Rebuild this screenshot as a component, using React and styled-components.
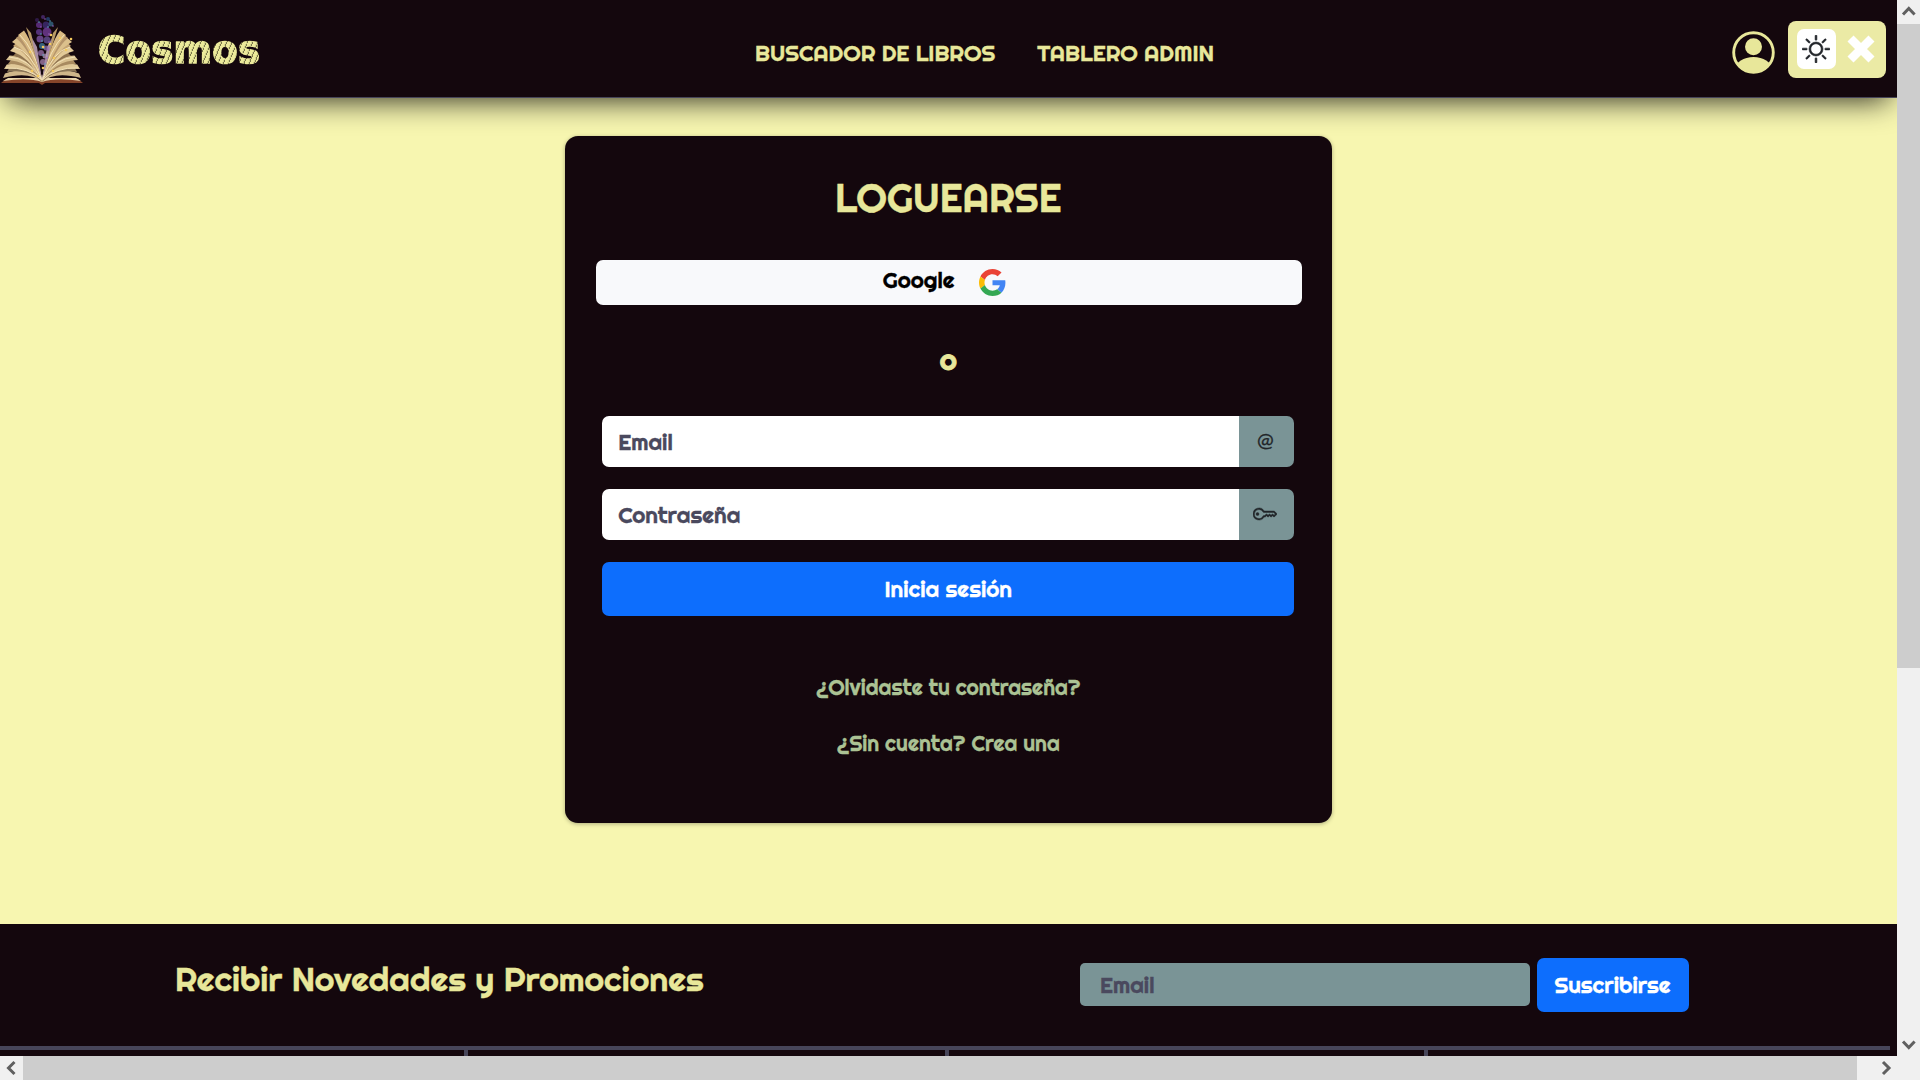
import React from "react";
import styled, { createGlobalStyle } from "styled-components";
import { BsSun, BsKey } from "react-icons/bs";

const ink = "#14070d";
const cream = "#e8e79a";
const sand = "#f7f6b0";
const slate = "#474559";
const sage = "#7a9496";
const blue = "#0d6efd";

const GlobalStyle = createGlobalStyle`
  * { box-sizing: border-box; }
  body { margin: 0; overflow: hidden; background: ${sand}; font-family: Righteous, Lato, "Open Sans", sans-serif; font-weight: 400; -webkit-text-stroke: 0.3px currentColor; }
  button, input { font: inherit; border: 0; margin: 0; -webkit-text-stroke: inherit; }
`;

const Window = styled.div`
  display: grid;
  grid-template-columns: 1897px 23px;
  grid-template-rows: 1056px 24px;
  width: 1920px;
  height: 1080px;
`;
const Viewport = styled.div`
  display: flex;
  flex-direction: column;
  overflow: hidden;
  background: ${sand};
`;
const Header = styled.header`
  flex: none;
  display: grid;
  grid-template-columns: 755px 1fr 165.5px;
  height: 98px;
  background: ${ink};
  border-bottom: 1px solid ${slate};
  box-shadow: 0 10px 30px -8px rgba(0, 0, 0, 0.85);
  z-index: 1;
`;
const Brand = styled.div`
  display: flex;
  align-items: flex-start;
  padding-top: 13px;
  gap: 13px;
`;
const BrandName = styled.span`
  font: 700 37px/44px "DejaVu Sans", sans-serif;
  margin-top: 16px;
  letter-spacing: 0.3px;
  color: transparent;
  -webkit-text-stroke: 1.6px transparent;
  background: repeating-linear-gradient(112deg, #ecea9b 0 3px, #d6d58c 3px 4px, #7a774b 4px 4.8px);
  -webkit-background-clip: text;
  background-clip: text;
`;
const Nav = styled.nav`
  display: flex;
  gap: 42px;
  padding-top: 38px;
`;
const NavLink = styled.a`
  font-size: 22.5px;
  line-height: 30px;
  white-space: nowrap;
  color: ${cream};
`;
const Tools = styled.div`
  display: flex;
  align-items: flex-start;
  gap: 13px;
  padding-top: 21px;
`;
const UserIcon = styled.svg`
  flex: none;
  margin-top: 9.5px;
`;
const ThemeToggle = styled.div`
  display: flex;
  align-items: center;
  gap: 11px;
  width: 98.5px;
  height: 56.5px;
  padding: 0 9px 1px;
  border-radius: 8px;
  background: #ebeaa5;
`;
const Knob = styled.span`
  display: grid;
  place-items: center;
  width: 39px;
  height: 40px;
  border-radius: 7px;
  background: #fff;
  color: #212529;
`;
const Main = styled.main`
  flex: none;
  height: 826px;
  padding-top: 38px;
`;
const Card = styled.section`
  width: 767.5px;
  height: 686.5px;
  margin-left: 564.5px;
  padding: 37.5px 31px 0;
  border-radius: 13px;
  background: ${ink};
  box-shadow: 0 1px 4px rgba(0, 0, 0, 0.3);
  text-align: center;
`;
const Title = styled.h1`
  margin: 0 0 38.5px;
  font-size: 39.4px;
  font-weight: 400;
  line-height: 48px;
  color: ${cream};
`;
const GoogleButton = styled.button`
  display: flex;
  align-items: center;
  justify-content: center;
  gap: 24.5px;
  width: 706px;
  height: 45px;
  padding: 0 8px 0 0;
  border-radius: 7px;
  background: #f8f9fb;
  color: #000;
  font-size: 22.5px;
`;
const ButtonLabel = styled.span`
  margin-top: -6px;
`;
const Or = styled.p`
  margin: 35px 0 36px;
  font-size: 29.5px;
  -webkit-text-stroke: 0.8px currentColor;
  line-height: 40px;
  color: ${cream};
`;
const Form = styled.form`
  display: flex;
  flex-direction: column;
  gap: 22.3px;
  width: 692px;
  margin: 0 auto;
`;
const Field = styled.label`
  display: flex;
  height: 50.7px;
  border-radius: 7px;
  overflow: hidden;
`;
const Input = styled.input`
  flex: 1;
  min-width: 0;
  padding: 1px 16px 0;
  font-size: 22.5px;
  background: #fff;
  outline: none;
  &::placeholder { color: #4a495e; opacity: 1; }
`;
const Addon = styled.span`
  display: grid;
  place-items: center;
  width: 55px;
  padding: 0 3px ${(p) => p.$lift || 0}px 0;
  background: ${sage};
  color: #212529;
  font: 400 20px/24px Lato, sans-serif;
`;
const PrimaryButton = styled.button`
  flex: none;
  width: ${(p) => p.$width};
  height: 54px;
  padding: 0;
  border-radius: 7px;
  background: ${blue};
  color: #fff;
  font-size: 22.5px;
`;
const Links = styled.div`
  display: flex;
  flex-direction: column;
  gap: 26.5px;
  padding-top: 56px;
`;
const TextLink = styled.a`
  font-size: 21.1px;
  line-height: 30px;
  color: #abc294;
`;
const Footer = styled.footer`
  flex: none;
  height: 132px;
  background: ${ink};
`;
const Newsletter = styled.div`
  display: flex;
  align-items: flex-start;
  height: 122px;
  padding: 33.5px 208.5px 0 175px;
`;
const NewsTitle = styled.h2`
  flex: 1;
  margin: 1.5px 0 0;
  font-size: 33.8px;
  font-weight: 400;
  line-height: 40px;
  color: ${cream};
`;
const NewsInput = styled(Input)`
  flex: none;
  width: 450px;
  height: 43px;
  margin: 5.5px 7px 0 0;
  padding: 1px 20.5px 0;
  border-radius: 5px;
  background: ${sage};
`;
const Columns = styled.div`
  display: grid;
  grid-template-columns: 468px 480.5px 479.5px 1fr;
  width: 1890px;
  height: 10px;
  border-top: 4.5px solid ${slate};
`;
const Column = styled.div`
  border-right: ${(p) => (p.$last ? 0 : 4)}px solid ${slate};
`;
const VBar = styled.div`
  display: flex;
  flex-direction: column;
  align-items: center;
  background: #f0f0f0;
`;
const HBar = styled.div`
  display: flex;
  align-items: center;
  grid-column: 1 / 3;
  background: #f0f0f0;
`;
const Arrow = styled.svg`
  flex: none;
  fill: none;
  stroke: #606060;
  stroke-width: 3;
`;
const VThumb = styled.div`
  width: 23px;
  height: 644px;
  margin-bottom: auto;
  background: #cdcdcd;
`;
const HThumb = styled.div`
  width: 1834px;
  height: 24px;
  margin-right: auto;
  background: #cdcdcd;
`;

const pages = [
  [3, 65, "#cfb68a"], [7, 59, "#8a7557"], [4, 56, "#e0c898"], [8, 51, "#a88a60"], [6, 47, "#d9c090"],
  [13, 43, "#8f7350"], [10, 38, "#e2c998"], [13, 33, "#c4a473"], [12, 29, "#dcc08c"], [16, 25, "#b5946a"],
  [18, 22, "#d8b982"],
];
const sparks = [
  [30, 39], [43, 34], [51, 22], [60, 25], [71, 26], [54, 45], [43, 55], [32, 58], [53, 58], [38, 63], [66, 37], [50, 31],
];
const dust = [
  [37, 7, 2, "#38205c"], [43, 4, 2, "#51307e"], [48, 6, 2, "#274b80"], [39, 12, 3, "#6b3596"], [46, 12, 3.5, "#41307b"],
  [51, 11, 2.5, "#366c8a"], [39, 19, 3, "#6a3f9c"], [47, 19, 4.5, "#7a42a2"], [40, 26, 3.5, "#8158ac"], [47, 27, 3.5, "#6a559c"],
  [42, 33, 3, "#4180a0"], [46, 35, 2.5, "#8a6aaa"], [41, 40, 3, "#9b74ae"], [45, 43, 2.5, "#b69bbc"], [43, 49, 3, "#a884b0"],
];

function BookLogo() {
  return (
    <svg width="85" height="75" viewBox="0 0 85 75">
      <path d="M1 70L6 66H78L83 70H45L42 72L39 70Z" fill="#86452a" />
      <path d="M3 68Q28 64 42 69Q56 64 81 68L76 65H8Z" fill="#ead6ad" />
      {[1, -1].map((side) => (
        <g key={side} transform={side === 1 ? undefined : "translate(84 0) scale(-1 1)"}>
          {pages.map(([x, y, fill], i) => (
            <path
              key={i}
              d={`M42 69Q${30 - i * 0.2} ${58 - i * 2.6} ${x} ${y}L${x + 2 + i * 0.4} ${y - 4.5}Q${32 + i * 0.2} ${51 - i * 2} 42 69Z`}
              fill={fill}
            />
          ))}
          <path d="M42 67Q28 54 6 55M42 67Q29 45 9 44M42 67Q31 38 14 34M42 66Q34 36 20 22" fill="none" stroke="#f3e2b8" strokeWidth="1" />
          <path d="M42 66L26 14L31 20Z" fill="#b99a67" />
          <path d="M42 67Q34 40 32 25L37 34Z" fill="#a98fa4" />
        </g>
      ))}
      {dust.map(([x, y, r, fill], i) => (
        <circle key={i} cx={x} cy={y} r={r} fill={fill} opacity="0.75" />
      ))}
      {dust.map(([x, y], i) => (
        <circle key={i} cx={x + 2} cy={y + 2} r="0.8" fill={i % 2 ? "#9a63c4" : "#58a9bd"} />
      ))}
      {sparks.map(([x, y], i) => (
        <circle key={i} cx={x} cy={y} r="1.3" fill="#f3c95d" />
      ))}
    </svg>
  );
}

function GoogleMark() {
  return (
    <svg width="27" height="27" viewBox="0 0 48 48">
      <path fill="#EA4335" d="M24 9.5c3.54 0 6.71 1.22 9.21 3.6l6.85-6.85C35.9 2.38 30.47 0 24 0 14.62 0 6.51 5.38 2.56 13.22l7.98 6.19C12.43 13.72 17.74 9.5 24 9.5z" />
      <path fill="#4285F4" d="M46.98 24.55c0-1.57-.15-3.09-.38-4.55H24v9.02h12.94c-.58 2.96-2.26 5.48-4.78 7.18l7.73 6c4.51-4.18 7.09-10.36 7.09-17.65z" />
      <path fill="#FBBC05" d="M10.53 28.59c-.48-1.45-.76-2.99-.76-4.59s.27-3.14.76-4.59l-7.98-6.19C.92 16.46 0 20.12 0 24c0 3.88.92 7.54 2.56 10.78l7.97-6.19z" />
      <path fill="#34A853" d="M24 48c6.48 0 11.93-2.13 15.89-5.81l-7.73-6c-2.15 1.45-4.92 2.3-8.16 2.3-6.26 0-11.57-4.22-13.47-9.91l-7.98 6.19C6.51 42.62 14.62 48 24 48z" />
    </svg>
  );
}

function User() {
  return (
    <UserIcon width="43" height="43" viewBox="0 0 43 43">
      <defs>
        <clipPath id="user-disc"><circle cx="21.5" cy="21.5" r="20.5" /></clipPath>
      </defs>
      <circle cx="21.5" cy="15.7" r="8.5" fill={cream} />
      <ellipse cx="21.5" cy="38" rx="18" ry="12" fill={cream} clipPath="url(#user-disc)" />
      <circle cx="21.5" cy="21.5" r="19.8" fill="none" stroke={cream} strokeWidth="2.9" />
    </UserIcon>
  );
}

export default function App() {
  return (
    <Window>
      <GlobalStyle />
      <Viewport>
        <Header>
          <Brand>
            <BookLogo />
            <BrandName>Cosmos</BrandName>
          </Brand>
          <Nav>
            <NavLink>BUSCADOR DE LIBROS</NavLink>
            <NavLink>TABLERO ADMIN</NavLink>
          </Nav>
          <Tools>
            <User />
            <ThemeToggle>
              <Knob><BsSun size={28} strokeWidth={0.35} stroke="currentColor" /></Knob>
              <svg width="28" height="28" viewBox="0 0 28 28">
                <path d="M3.5 3.5L24.5 24.5M24.5 3.5L3.5 24.5" stroke="#fff" strokeWidth="8.5" />
              </svg>
            </ThemeToggle>
          </Tools>
        </Header>
        <Main>
          <Card>
            <Title>LOGUEARSE</Title>
            <GoogleButton>
              <ButtonLabel>Google</ButtonLabel>
              <GoogleMark />
            </GoogleButton>
            <Or>o</Or>
            <Form>
              <Field>
                <Input placeholder="Email" />
                <Addon $lift={5}>@</Addon>
              </Field>
              <Field>
                <Input placeholder="Contraseña" />
                <Addon><BsKey size={24} strokeWidth={0.3} stroke="currentColor" /></Addon>
              </Field>
              <PrimaryButton type="button" $width="692px">Inicia sesión</PrimaryButton>
            </Form>
            <Links>
              <TextLink>¿Olvidaste tu contraseña?</TextLink>
              <TextLink>¿Sin cuenta? Crea una</TextLink>
            </Links>
          </Card>
        </Main>
        <Footer>
          <Newsletter>
            <NewsTitle>Recibir Novedades y Promociones</NewsTitle>
            <NewsInput placeholder="Email" />
            <PrimaryButton $width="152px">Suscribirse</PrimaryButton>
          </Newsletter>
          <Columns>
            <Column /><Column /><Column /><Column $last />
          </Columns>
        </Footer>
      </Viewport>
      <VBar>
        <Arrow width="23" height="24" viewBox="0 0 23 24"><path d="M6 14.5L11.8 8.5L17.6 14.5" /></Arrow>
        <VThumb />
        <Arrow width="23" height="24" viewBox="0 0 23 24"><path d="M6 9.5L11.8 15.5L17.6 9.5" /></Arrow>
      </VBar>
      <HBar>
        <Arrow width="23" height="24" viewBox="0 0 23 24"><path d="M14.5 6L8.5 12L14.5 18" /></Arrow>
        <HThumb />
        <Arrow width="46" height="24" viewBox="0 0 46 24"><path d="M9 6L15 12L9 18" /></Arrow>
      </HBar>
    </Window>
  );
}
